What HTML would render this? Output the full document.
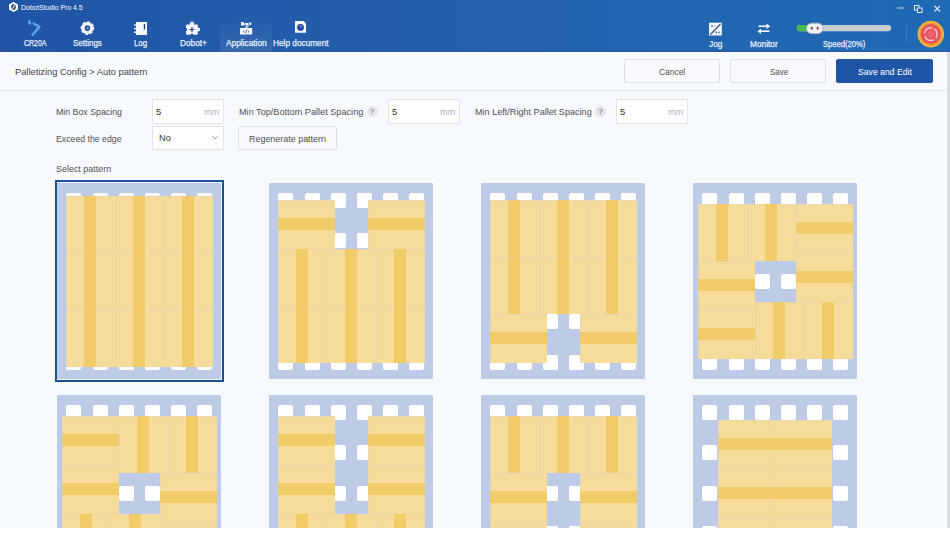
<!DOCTYPE html>
<html><head><meta charset="utf-8"><style>
*{box-sizing:border-box}
html,body{margin:0;padding:0}
body{width:950px;height:533px;overflow:hidden;position:relative;background:#fff;font-family:"Liberation Sans",sans-serif}
.abs{position:absolute}
#hdr{position:absolute;left:0;top:0;width:950px;height:52px;background:linear-gradient(90deg,#2154a6,#2360ac 45%,#1f6ab5);border-bottom:1px solid #2f55ad}
#crumb{position:absolute;left:0;top:52px;width:947px;height:38px;background:#f8fbfd}
#sep{position:absolute;left:0;top:90px;width:947px;height:1px;background:#e3e6eb}
#main{position:absolute;left:0;top:91px;width:947px;height:437px;background:#f7fafd}
#sbar{position:absolute;left:947px;top:52px;width:3px;height:476px;background:#dadde4}
.t{position:absolute;white-space:nowrap;color:#333;font-size:10px;line-height:12px;transform-origin:0 0}
.btn{position:absolute;border:1px solid #dde1e8;background:#f8fafd;border-radius:2px}
.inp{position:absolute;border:1px solid #e2e5eb;background:#fff;border-radius:1px}
.pal{position:absolute;width:164px;height:196px;background:#becbe6;border-radius:1px}
.pal i{position:absolute;width:15px;height:15px;background:#fff;border-radius:2px}
.pal b{position:absolute;background-color:#f6dc9b;box-shadow:inset 1px 1px 0 0 #e9d5b0}
.pal b.bv{background-image:linear-gradient(90deg,transparent 4px,rgba(226,196,150,.1) 4px,rgba(226,196,150,.1) 5px,transparent 5px,transparent 10px,rgba(226,196,150,.1) 10px,rgba(226,196,150,.1) 11px,transparent 11px,transparent 34px,rgba(226,196,150,.1) 34px,rgba(226,196,150,.1) 35px,transparent 35px,transparent 44px,rgba(226,196,150,.1) 44px,rgba(226,196,150,.1) 45px,transparent 45px)}
.pal b.bh{background-image:linear-gradient(180deg,transparent 4px,rgba(226,196,150,.1) 4px,rgba(226,196,150,.1) 5px,transparent 5px,transparent 10px,rgba(226,196,150,.1) 10px,rgba(226,196,150,.1) 11px,transparent 11px,transparent 34px,rgba(226,196,150,.1) 34px,rgba(226,196,150,.1) 35px,transparent 35px,transparent 44px,rgba(226,196,150,.1) 44px,rgba(226,196,150,.1) 45px,transparent 45px)}
.bv{width:49px;height:57px}
.bh{width:57px;height:49px}
.bv:after{content:"";position:absolute;left:18.5px;top:0;width:12px;height:57px;background:#f2cc69}
.bh:after{content:"";position:absolute;left:0;top:18.5px;width:57px;height:12px;background:#f2cc69}
#clip{position:absolute;left:0;top:0;width:947px;height:528px;overflow:hidden}
#sel{position:absolute;left:55px;top:180px;width:169px;height:202px;border:2px solid #1d4f9f}
.q{position:absolute;width:11px;height:11px;border-radius:50%;background:#e4e6ea;color:#666;font-size:8px;line-height:11px;text-align:center}
</style></head>
<body>
<div id="hdr"></div>

<svg class="abs" style="left:0;top:0" width="950" height="52" viewBox="0 0 950 52">
 <!-- logo hexagon -->
 <polygon points="13.5,2 18,4.5 18,9.5 13.5,12 9,9.5 9,4.5" fill="#fff"/>
 <ellipse cx="13.5" cy="7" rx="2.3" ry="3" fill="#3a4a6a"/>
 <line x1="14.6" y1="4.6" x2="12.4" y2="9.4" stroke="#fff" stroke-width="1"/>
 <!-- window controls -->
 <line x1="897" y1="8" x2="904" y2="8" stroke="#b9c8e4" stroke-width="1"/>
 <rect x="914.5" y="5.5" width="4.5" height="4.5" fill="none" stroke="#dfe7f5" stroke-width="1"/>
 <rect x="917.5" y="8" width="4.5" height="4.5" fill="#1f60b3" stroke="#dfe7f5" stroke-width="1"/>
 <path d="M934.5,6 L940,11.5 M940,6 L934.5,11.5" stroke="#dfe7f5" stroke-width="1.1"/>
 <!-- CR20A arm -->
 <rect x="28.3" y="20.3" width="2.6" height="4.3" rx="0.6" fill="#5aa5ec" transform="rotate(-12 29.6 22.5)"/>
 <path d="M32.9,23 L39.4,26.9 L31.9,35.6" fill="none" stroke="#5aa5ec" stroke-width="2.5" stroke-linejoin="round" stroke-linecap="butt"/>
 <!-- settings gear -->
 <circle cx="87.4" cy="28.1" r="4.4" fill="none" stroke="#f2f6ff" stroke-width="3.6"/>
 <circle cx="87.4" cy="28.1" r="6.1" fill="none" stroke="#f2f6ff" stroke-width="1.6" stroke-dasharray="2.6 2.19" transform="rotate(-8 87.4 28.1)"/>
 <circle cx="87.4" cy="28.1" r="2.6" fill="#243f8c"/>
 <circle cx="87.6" cy="28.1" r="1.3" fill="#7fa3e8"/>
 <!-- log notebook -->
 <rect x="136" y="22" width="11" height="13" fill="#f4f7ff"/>
 <rect x="134" y="24.3" width="3" height="1.4" fill="#f4f7ff"/>
 <rect x="134" y="27.9" width="3" height="1.4" fill="#f4f7ff"/>
 <rect x="134" y="31.5" width="3" height="1.4" fill="#f4f7ff"/>
 <rect x="143.8" y="24" width="1.3" height="5.5" fill="#1d3f86"/>
 <!-- dobot+ puzzle -->
 <rect x="186" y="24.6" width="11.8" height="10.1" rx="0.8" fill="#f4f7ff"/>
 <circle cx="192" cy="23.6" r="2.1" fill="#f4f7ff"/>
 <circle cx="198.1" cy="29.6" r="2" fill="#f4f7ff"/>
 <circle cx="185.6" cy="29.6" r="1.5" fill="#2156a7"/>
 <circle cx="192" cy="35.1" r="1.5" fill="#2156a7"/>
 <path d="M192,27 v5 M189.5,29.5 h5" stroke="#1d3f86" stroke-width="1.1"/>
 <!-- application -->
 <rect x="220" y="15" width="52" height="37" fill="url(#hl)"/>
 <rect x="241" y="22" width="3" height="3.5" fill="#f4f7ff"/>
 <rect x="244.5" y="23" width="4" height="2.4" fill="#f4f7ff"/>
 <rect x="249.3" y="22.5" width="2" height="2.5" fill="#f4f7ff"/>
 <path d="M248.5,25.5 L245,28.5" stroke="#f4f7ff" stroke-width="1.2"/>
 <rect x="240" y="28" width="12.2" height="6.5" fill="#f4f7ff"/>
 <path d="M244.3,30.3 l-1.2,1.2 l1.2,1.2 M247.8,30.3 l1.2,1.2 l-1.2,1.2 M246.6,29.8 l-1,3.4" fill="none" stroke="#2d4f93" stroke-width="0.8"/>
 <!-- help document -->
 <path d="M295,21 h8.5 l2.5,2.5 v9.3 h-11 z" fill="#f4f7ff"/>
 <circle cx="300.5" cy="27.4" r="3.4" fill="#2545a0"/>
 <path d="M299.6,26.4 a1,1 0 1 1 1.4,1 v0.8" fill="none" stroke="#9fc0ff" stroke-width="0.7"/>
 <!-- jog -->
 <rect x="709" y="22.7" width="12.8" height="12.8" fill="#f4f7ff"/>
 <path d="M720.5,24 L710.5,34.5" stroke="#35507f" stroke-width="1.3"/>
 <rect x="711" y="25" width="2" height="2" fill="#8090b0"/><rect x="714" y="25.6" width="1.6" height="0.8" fill="#8090b0"/>
 <rect x="715.5" y="31.5" width="1.5" height="1.8" fill="#6070a0"/><rect x="718" y="31.5" width="1.5" height="1.8" fill="#6070a0"/>
 <!-- monitor arrows -->
 <path d="M758.5,26.2 H769" stroke="#f4f7ff" stroke-width="1.6"/>
 <path d="M766.5,23.5 L770.2,26.2 L766.5,28.9 z" fill="#f4f7ff"/>
 <path d="M759,31.2 H769.5" stroke="#f4f7ff" stroke-width="1.6"/>
 <path d="M761,28.5 L757.5,31.2 L761,33.9 z" fill="#f4f7ff"/>
 <!-- slider -->
 <rect x="796.7" y="25" width="94.5" height="6.2" rx="3.1" fill="#c9ccd2"/>
 <rect x="796.7" y="25" width="14" height="6.2" rx="3.1" fill="#4cb84a"/>
 <rect x="806.6" y="23.2" width="16.4" height="10.4" rx="5.2" fill="#eef0f3" stroke="#b4b9c2" stroke-width="1"/>
 <ellipse cx="811.8" cy="28.3" rx="1.1" ry="1.7" fill="#8f5c5c"/>
 <ellipse cx="817.6" cy="28.3" rx="1.1" ry="1.7" fill="#8f5c5c"/>
 <!-- separator -->
 <line x1="906.7" y1="24.5" x2="906.7" y2="43" stroke="#4f7fc4" stroke-width="0.8"/>
 <!-- estop -->
 <circle cx="930.8" cy="34.1" r="13.3" fill="#eeb43e"/>
 <circle cx="930.8" cy="34.1" r="11.6" fill="#f09a36"/>
 <circle cx="930.8" cy="34.1" r="10" fill="#e8525a"/>
 <circle cx="930.8" cy="34.1" r="6.3" fill="none" stroke="#f6c2cc" stroke-width="1.5" stroke-dasharray="10.5 2.7" transform="rotate(-60 930.8 34.1)"/>
 <circle cx="930.8" cy="34.1" r="3.6" fill="#ec6274"/>
 <defs><linearGradient id="hl" x1="0" y1="0" x2="0" y2="1"><stop offset="0" stop-color="#ffffff" stop-opacity="0"/><stop offset="1" stop-color="#ffffff" stop-opacity="0.09"/></linearGradient></defs>
</svg>

<div id="crumb"></div>
<div id="sep"></div>
<div id="sbar"></div>
<div id="main"></div>
<div class="btn" style="left:624px;top:59px;width:96px;height:24px"></div>
<div class="btn" style="left:730px;top:59px;width:96px;height:24px"></div>
<div class="btn" style="left:836px;top:59px;width:97px;height:24px;background:#1f55a6;border-color:#1f55a6"></div>
<div class="inp" style="left:152px;top:99px;width:72px;height:25px"></div>
<div class="inp" style="left:388px;top:99px;width:72px;height:25px"></div>
<div class="inp" style="left:616px;top:99px;width:72px;height:25px"></div>
<div class="q" style="left:366.5px;top:106px">?</div>
<div class="q" style="left:595px;top:106px">?</div>
<div class="inp" style="left:152px;top:126px;width:72px;height:24px"></div>
<svg class="abs" style="left:210px;top:134px" width="10" height="8"><path d="M2,2 L5,5 L8,2" fill="none" stroke="#999" stroke-width="0.9"/></svg>
<div class="btn" style="left:238px;top:126px;width:99px;height:24px"></div>
<div class="t" style="left:21px;top:2.64px;font-size:7.4px;line-height:9.4px;color:#fff;transform:scaleX(0.9254);">DobotStudio Pro 4.5</div>
<div class="t" style="left:23.8px;top:37.70px;font-size:8.5px;line-height:10.5px;color:#e6eefa;transform:scaleX(0.8210);-webkit-text-stroke:0.25px #e6eefa;">CR20A</div>
<div class="t" style="left:72.8px;top:37.70px;font-size:8.5px;line-height:10.5px;color:#e6eefa;transform:scaleX(0.9375);-webkit-text-stroke:0.25px #e6eefa;">Settings</div>
<div class="t" style="left:133.7px;top:37.70px;font-size:8.5px;line-height:10.5px;color:#e6eefa;transform:scaleX(0.9233);-webkit-text-stroke:0.25px #e6eefa;">Log</div>
<div class="t" style="left:179.8px;top:37.70px;font-size:8.5px;line-height:10.5px;color:#e6eefa;transform:scaleX(0.9727);-webkit-text-stroke:0.25px #e6eefa;">Dobot+</div>
<div class="t" style="left:225.5px;top:37.70px;font-size:8.5px;line-height:10.5px;color:#e6eefa;transform:scaleX(0.9785);-webkit-text-stroke:0.25px #e6eefa;">Application</div>
<div class="t" style="left:272.6px;top:37.70px;font-size:8.5px;line-height:10.5px;color:#e6eefa;transform:scaleX(0.9725);-webkit-text-stroke:0.25px #e6eefa;">Help document</div>
<div class="t" style="left:709px;top:39.10px;font-size:8.5px;line-height:10.5px;color:#e6eefa;transform:scaleX(0.9768);-webkit-text-stroke:0.25px #e6eefa;">Jog</div>
<div class="t" style="left:750.1px;top:39.10px;font-size:8.5px;line-height:10.5px;color:#e6eefa;transform:scaleX(0.9773);-webkit-text-stroke:0.25px #e6eefa;">Monitor</div>
<div class="t" style="left:822.6px;top:39.10px;font-size:8.5px;line-height:10.5px;color:#e6eefa;transform:scaleX(0.8928);-webkit-text-stroke:0.25px #e6eefa;">Speed(20%)</div>
<div class="t" style="left:15px;top:65.57px;font-size:9.6px;line-height:11.6px;color:#454545;transform:scaleX(0.9677);">Palletizing Config &gt; Auto pattern</div>
<div class="t" style="left:659.2px;top:65.66px;font-size:9.5px;line-height:11.5px;color:#505050;transform:scaleX(0.8858);">Cancel</div>
<div class="t" style="left:769.6px;top:65.66px;font-size:9.5px;line-height:11.5px;color:#505050;transform:scaleX(0.8404);">Save</div>
<div class="t" style="left:857.7px;top:65.66px;font-size:9.5px;line-height:11.5px;color:#fff;transform:scaleX(0.9095);">Save and Edit</div>
<div class="t" style="left:56px;top:105.64px;font-size:9.4px;line-height:11.4px;color:#505050;transform:scaleX(0.9380);">Min Box Spacing</div>
<div class="t" style="left:238.8px;top:105.64px;font-size:9.4px;line-height:11.4px;color:#505050;transform:scaleX(0.9749);">Min Top/Bottom Pallet Spacing</div>
<div class="t" style="left:474.6px;top:105.64px;font-size:9.4px;line-height:11.4px;color:#505050;transform:scaleX(0.9693);">Min Left/Right Pallet Spacing</div>
<div class="t" style="left:55.8px;top:132.94px;font-size:9.4px;line-height:11.4px;color:#505050;transform:scaleX(0.9307);">Exceed the edge</div>
<div class="t" style="left:249px;top:132.94px;font-size:9.4px;line-height:11.4px;color:#505050;transform:scaleX(0.9530);">Regenerate pattern</div>
<div class="t" style="left:55.8px;top:162.94px;font-size:9.4px;line-height:11.4px;color:#505050;transform:scaleX(0.9540);">Select pattern</div>
<div class="t" style="left:156px;top:105.64px;font-size:9.4px;line-height:11.4px;color:#333;transform:scaleX(1.0000);">5</div>
<div class="t" style="left:392px;top:105.64px;font-size:9.4px;line-height:11.4px;color:#333;transform:scaleX(1.0000);">5</div>
<div class="t" style="left:620px;top:105.64px;font-size:9.4px;line-height:11.4px;color:#333;transform:scaleX(1.0000);">5</div>
<div class="t" style="left:204.4px;top:106.04px;font-size:9.4px;line-height:11.4px;color:#a9adb5;transform:scaleX(0.9792);">mm</div>
<div class="t" style="left:440.4px;top:106.04px;font-size:9.4px;line-height:11.4px;color:#a9adb5;transform:scaleX(0.9792);">mm</div>
<div class="t" style="left:668.4px;top:106.04px;font-size:9.4px;line-height:11.4px;color:#a9adb5;transform:scaleX(0.9792);">mm</div>
<div class="t" style="left:158.6px;top:132.04px;font-size:9.4px;line-height:11.4px;color:#333;transform:scaleX(0.9846);">No</div>
<div id="clip"><div id="sel"></div>
<div class="pal" style="left:57.2px;top:183px"><i style="left:9.2px;top:10.0px"></i><i style="left:35.4px;top:10.0px"></i><i style="left:61.6px;top:10.0px"></i><i style="left:87.8px;top:10.0px"></i><i style="left:114.0px;top:10.0px"></i><i style="left:140.2px;top:10.0px"></i><i style="left:9.2px;top:50.4px"></i><i style="left:35.4px;top:50.4px"></i><i style="left:61.6px;top:50.4px"></i><i style="left:87.8px;top:50.4px"></i><i style="left:114.0px;top:50.4px"></i><i style="left:140.2px;top:50.4px"></i><i style="left:9.2px;top:90.8px"></i><i style="left:35.4px;top:90.8px"></i><i style="left:61.6px;top:90.8px"></i><i style="left:87.8px;top:90.8px"></i><i style="left:114.0px;top:90.8px"></i><i style="left:140.2px;top:90.8px"></i><i style="left:9.2px;top:131.2px"></i><i style="left:35.4px;top:131.2px"></i><i style="left:61.6px;top:131.2px"></i><i style="left:87.8px;top:131.2px"></i><i style="left:114.0px;top:131.2px"></i><i style="left:140.2px;top:131.2px"></i><i style="left:9.2px;top:171.6px"></i><i style="left:35.4px;top:171.6px"></i><i style="left:61.6px;top:171.6px"></i><i style="left:87.8px;top:171.6px"></i><i style="left:114.0px;top:171.6px"></i><i style="left:140.2px;top:171.6px"></i><b class="bv" style="left:8.5px;top:12.5px"></b><b class="bv" style="left:57.5px;top:12.5px"></b><b class="bv" style="left:106.5px;top:12.5px"></b><b class="bv" style="left:8.5px;top:69.5px"></b><b class="bv" style="left:57.5px;top:69.5px"></b><b class="bv" style="left:106.5px;top:69.5px"></b><b class="bv" style="left:8.5px;top:126.5px"></b><b class="bv" style="left:57.5px;top:126.5px"></b><b class="bv" style="left:106.5px;top:126.5px"></b></div><div class="pal" style="left:269.2px;top:183px"><i style="left:9.2px;top:10.0px"></i><i style="left:35.4px;top:10.0px"></i><i style="left:61.6px;top:10.0px"></i><i style="left:87.8px;top:10.0px"></i><i style="left:114.0px;top:10.0px"></i><i style="left:140.2px;top:10.0px"></i><i style="left:9.2px;top:50.4px"></i><i style="left:35.4px;top:50.4px"></i><i style="left:61.6px;top:50.4px"></i><i style="left:87.8px;top:50.4px"></i><i style="left:114.0px;top:50.4px"></i><i style="left:140.2px;top:50.4px"></i><i style="left:9.2px;top:90.8px"></i><i style="left:35.4px;top:90.8px"></i><i style="left:61.6px;top:90.8px"></i><i style="left:87.8px;top:90.8px"></i><i style="left:114.0px;top:90.8px"></i><i style="left:140.2px;top:90.8px"></i><i style="left:9.2px;top:131.2px"></i><i style="left:35.4px;top:131.2px"></i><i style="left:61.6px;top:131.2px"></i><i style="left:87.8px;top:131.2px"></i><i style="left:114.0px;top:131.2px"></i><i style="left:140.2px;top:131.2px"></i><i style="left:9.2px;top:171.6px"></i><i style="left:35.4px;top:171.6px"></i><i style="left:61.6px;top:171.6px"></i><i style="left:87.8px;top:171.6px"></i><i style="left:114.0px;top:171.6px"></i><i style="left:140.2px;top:171.6px"></i><b class="bh" style="left:8.5px;top:16.5px"></b><b class="bh" style="left:98.5px;top:16.5px"></b><b class="bv" style="left:8.5px;top:65.5px"></b><b class="bv" style="left:57.5px;top:65.5px"></b><b class="bv" style="left:106.5px;top:65.5px"></b><b class="bv" style="left:8.5px;top:122.5px"></b><b class="bv" style="left:57.5px;top:122.5px"></b><b class="bv" style="left:106.5px;top:122.5px"></b></div><div class="pal" style="left:481.2px;top:183px"><i style="left:9.2px;top:10.0px"></i><i style="left:35.4px;top:10.0px"></i><i style="left:61.6px;top:10.0px"></i><i style="left:87.8px;top:10.0px"></i><i style="left:114.0px;top:10.0px"></i><i style="left:140.2px;top:10.0px"></i><i style="left:9.2px;top:50.4px"></i><i style="left:35.4px;top:50.4px"></i><i style="left:61.6px;top:50.4px"></i><i style="left:87.8px;top:50.4px"></i><i style="left:114.0px;top:50.4px"></i><i style="left:140.2px;top:50.4px"></i><i style="left:9.2px;top:90.8px"></i><i style="left:35.4px;top:90.8px"></i><i style="left:61.6px;top:90.8px"></i><i style="left:87.8px;top:90.8px"></i><i style="left:114.0px;top:90.8px"></i><i style="left:140.2px;top:90.8px"></i><i style="left:9.2px;top:131.2px"></i><i style="left:35.4px;top:131.2px"></i><i style="left:61.6px;top:131.2px"></i><i style="left:87.8px;top:131.2px"></i><i style="left:114.0px;top:131.2px"></i><i style="left:140.2px;top:131.2px"></i><i style="left:9.2px;top:171.6px"></i><i style="left:35.4px;top:171.6px"></i><i style="left:61.6px;top:171.6px"></i><i style="left:87.8px;top:171.6px"></i><i style="left:114.0px;top:171.6px"></i><i style="left:140.2px;top:171.6px"></i><b class="bv" style="left:8.5px;top:16.5px"></b><b class="bv" style="left:57.5px;top:16.5px"></b><b class="bv" style="left:106.5px;top:16.5px"></b><b class="bv" style="left:8.5px;top:73.5px"></b><b class="bv" style="left:57.5px;top:73.5px"></b><b class="bv" style="left:106.5px;top:73.5px"></b><b class="bh" style="left:8.5px;top:130.5px"></b><b class="bh" style="left:98.5px;top:130.5px"></b></div><div class="pal" style="left:693.2px;top:183px"><i style="left:9.2px;top:10.0px"></i><i style="left:35.4px;top:10.0px"></i><i style="left:61.6px;top:10.0px"></i><i style="left:87.8px;top:10.0px"></i><i style="left:114.0px;top:10.0px"></i><i style="left:140.2px;top:10.0px"></i><i style="left:9.2px;top:50.4px"></i><i style="left:35.4px;top:50.4px"></i><i style="left:61.6px;top:50.4px"></i><i style="left:87.8px;top:50.4px"></i><i style="left:114.0px;top:50.4px"></i><i style="left:140.2px;top:50.4px"></i><i style="left:9.2px;top:90.8px"></i><i style="left:35.4px;top:90.8px"></i><i style="left:61.6px;top:90.8px"></i><i style="left:87.8px;top:90.8px"></i><i style="left:114.0px;top:90.8px"></i><i style="left:140.2px;top:90.8px"></i><i style="left:9.2px;top:131.2px"></i><i style="left:35.4px;top:131.2px"></i><i style="left:61.6px;top:131.2px"></i><i style="left:87.8px;top:131.2px"></i><i style="left:114.0px;top:131.2px"></i><i style="left:140.2px;top:131.2px"></i><i style="left:9.2px;top:171.6px"></i><i style="left:35.4px;top:171.6px"></i><i style="left:61.6px;top:171.6px"></i><i style="left:87.8px;top:171.6px"></i><i style="left:114.0px;top:171.6px"></i><i style="left:140.2px;top:171.6px"></i><b class="bv" style="left:4.5px;top:20.5px"></b><b class="bv" style="left:53.5px;top:20.5px"></b><b class="bh" style="left:102.5px;top:20.5px"></b><b class="bh" style="left:102.5px;top:69.5px"></b><b class="bh" style="left:4.5px;top:77.5px"></b><b class="bh" style="left:4.5px;top:126.5px"></b><b class="bv" style="left:61.5px;top:118.5px"></b><b class="bv" style="left:110.5px;top:118.5px"></b></div><div class="pal" style="left:57.2px;top:395px"><i style="left:9.2px;top:10.0px"></i><i style="left:35.4px;top:10.0px"></i><i style="left:61.6px;top:10.0px"></i><i style="left:87.8px;top:10.0px"></i><i style="left:114.0px;top:10.0px"></i><i style="left:140.2px;top:10.0px"></i><i style="left:9.2px;top:50.4px"></i><i style="left:35.4px;top:50.4px"></i><i style="left:61.6px;top:50.4px"></i><i style="left:87.8px;top:50.4px"></i><i style="left:114.0px;top:50.4px"></i><i style="left:140.2px;top:50.4px"></i><i style="left:9.2px;top:90.8px"></i><i style="left:35.4px;top:90.8px"></i><i style="left:61.6px;top:90.8px"></i><i style="left:87.8px;top:90.8px"></i><i style="left:114.0px;top:90.8px"></i><i style="left:140.2px;top:90.8px"></i><i style="left:9.2px;top:131.2px"></i><i style="left:35.4px;top:131.2px"></i><i style="left:61.6px;top:131.2px"></i><i style="left:87.8px;top:131.2px"></i><i style="left:114.0px;top:131.2px"></i><i style="left:140.2px;top:131.2px"></i><i style="left:9.2px;top:171.6px"></i><i style="left:35.4px;top:171.6px"></i><i style="left:61.6px;top:171.6px"></i><i style="left:87.8px;top:171.6px"></i><i style="left:114.0px;top:171.6px"></i><i style="left:140.2px;top:171.6px"></i><b class="bh" style="left:4.5px;top:20.5px"></b><b class="bh" style="left:4.5px;top:69.5px"></b><b class="bv" style="left:61.5px;top:20.5px"></b><b class="bv" style="left:110.5px;top:20.5px"></b><b class="bh" style="left:102.5px;top:77.5px"></b><b class="bh" style="left:102.5px;top:126.5px"></b><b class="bv" style="left:4.5px;top:118.5px"></b><b class="bv" style="left:53.5px;top:118.5px"></b></div><div class="pal" style="left:269.2px;top:395px"><i style="left:9.2px;top:10.0px"></i><i style="left:35.4px;top:10.0px"></i><i style="left:61.6px;top:10.0px"></i><i style="left:87.8px;top:10.0px"></i><i style="left:114.0px;top:10.0px"></i><i style="left:140.2px;top:10.0px"></i><i style="left:9.2px;top:50.4px"></i><i style="left:35.4px;top:50.4px"></i><i style="left:61.6px;top:50.4px"></i><i style="left:87.8px;top:50.4px"></i><i style="left:114.0px;top:50.4px"></i><i style="left:140.2px;top:50.4px"></i><i style="left:9.2px;top:90.8px"></i><i style="left:35.4px;top:90.8px"></i><i style="left:61.6px;top:90.8px"></i><i style="left:87.8px;top:90.8px"></i><i style="left:114.0px;top:90.8px"></i><i style="left:140.2px;top:90.8px"></i><i style="left:9.2px;top:131.2px"></i><i style="left:35.4px;top:131.2px"></i><i style="left:61.6px;top:131.2px"></i><i style="left:87.8px;top:131.2px"></i><i style="left:114.0px;top:131.2px"></i><i style="left:140.2px;top:131.2px"></i><i style="left:9.2px;top:171.6px"></i><i style="left:35.4px;top:171.6px"></i><i style="left:61.6px;top:171.6px"></i><i style="left:87.8px;top:171.6px"></i><i style="left:114.0px;top:171.6px"></i><i style="left:140.2px;top:171.6px"></i><b class="bh" style="left:8.5px;top:20.5px"></b><b class="bh" style="left:8.5px;top:69.5px"></b><b class="bh" style="left:98.5px;top:20.5px"></b><b class="bh" style="left:98.5px;top:69.5px"></b><b class="bv" style="left:8.5px;top:118.5px"></b><b class="bv" style="left:57.5px;top:118.5px"></b><b class="bv" style="left:106.5px;top:118.5px"></b></div><div class="pal" style="left:481.2px;top:395px"><i style="left:9.2px;top:10.0px"></i><i style="left:35.4px;top:10.0px"></i><i style="left:61.6px;top:10.0px"></i><i style="left:87.8px;top:10.0px"></i><i style="left:114.0px;top:10.0px"></i><i style="left:140.2px;top:10.0px"></i><i style="left:9.2px;top:50.4px"></i><i style="left:35.4px;top:50.4px"></i><i style="left:61.6px;top:50.4px"></i><i style="left:87.8px;top:50.4px"></i><i style="left:114.0px;top:50.4px"></i><i style="left:140.2px;top:50.4px"></i><i style="left:9.2px;top:90.8px"></i><i style="left:35.4px;top:90.8px"></i><i style="left:61.6px;top:90.8px"></i><i style="left:87.8px;top:90.8px"></i><i style="left:114.0px;top:90.8px"></i><i style="left:140.2px;top:90.8px"></i><i style="left:9.2px;top:131.2px"></i><i style="left:35.4px;top:131.2px"></i><i style="left:61.6px;top:131.2px"></i><i style="left:87.8px;top:131.2px"></i><i style="left:114.0px;top:131.2px"></i><i style="left:140.2px;top:131.2px"></i><i style="left:9.2px;top:171.6px"></i><i style="left:35.4px;top:171.6px"></i><i style="left:61.6px;top:171.6px"></i><i style="left:87.8px;top:171.6px"></i><i style="left:114.0px;top:171.6px"></i><i style="left:140.2px;top:171.6px"></i><b class="bv" style="left:8.5px;top:20.5px"></b><b class="bv" style="left:57.5px;top:20.5px"></b><b class="bv" style="left:106.5px;top:20.5px"></b><b class="bh" style="left:8.5px;top:77.5px"></b><b class="bh" style="left:8.5px;top:126.5px"></b><b class="bh" style="left:98.5px;top:77.5px"></b><b class="bh" style="left:98.5px;top:126.5px"></b></div><div class="pal" style="left:693.2px;top:395px"><i style="left:9.2px;top:10.0px"></i><i style="left:35.4px;top:10.0px"></i><i style="left:61.6px;top:10.0px"></i><i style="left:87.8px;top:10.0px"></i><i style="left:114.0px;top:10.0px"></i><i style="left:140.2px;top:10.0px"></i><i style="left:9.2px;top:50.4px"></i><i style="left:35.4px;top:50.4px"></i><i style="left:61.6px;top:50.4px"></i><i style="left:87.8px;top:50.4px"></i><i style="left:114.0px;top:50.4px"></i><i style="left:140.2px;top:50.4px"></i><i style="left:9.2px;top:90.8px"></i><i style="left:35.4px;top:90.8px"></i><i style="left:61.6px;top:90.8px"></i><i style="left:87.8px;top:90.8px"></i><i style="left:114.0px;top:90.8px"></i><i style="left:140.2px;top:90.8px"></i><i style="left:9.2px;top:131.2px"></i><i style="left:35.4px;top:131.2px"></i><i style="left:61.6px;top:131.2px"></i><i style="left:87.8px;top:131.2px"></i><i style="left:114.0px;top:131.2px"></i><i style="left:140.2px;top:131.2px"></i><i style="left:9.2px;top:171.6px"></i><i style="left:35.4px;top:171.6px"></i><i style="left:61.6px;top:171.6px"></i><i style="left:87.8px;top:171.6px"></i><i style="left:114.0px;top:171.6px"></i><i style="left:140.2px;top:171.6px"></i><b class="bh" style="left:25.0px;top:24.5px"></b><b class="bh" style="left:82.0px;top:24.5px"></b><b class="bh" style="left:25.0px;top:73.5px"></b><b class="bh" style="left:82.0px;top:73.5px"></b><b class="bh" style="left:25.0px;top:122.5px"></b><b class="bh" style="left:82.0px;top:122.5px"></b></div></div>
</body></html>
